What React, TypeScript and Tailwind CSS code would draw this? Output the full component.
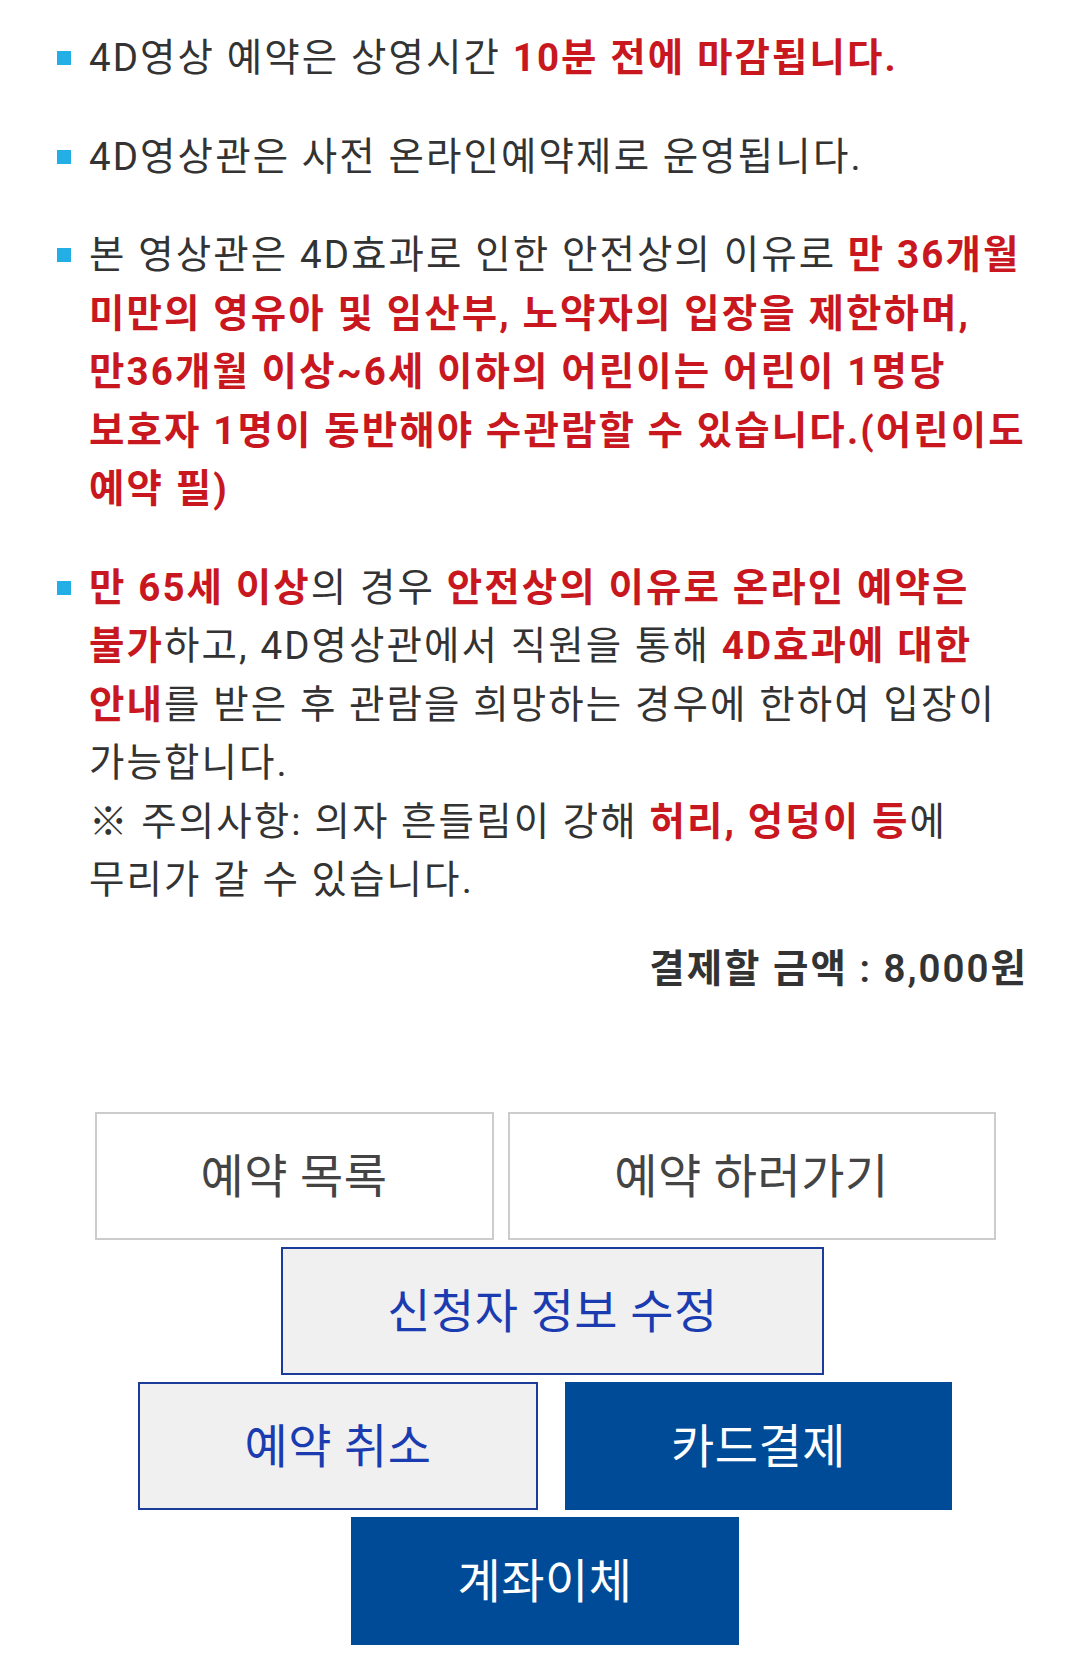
import React from "react";

const R = ({ children }: { children: React.ReactNode }) => (
  <b className="font-bold text-[#c8171e]">{children}</b>
);

function Note({ children }: { children: React.ReactNode }) {
  return (
    <li className="flex items-start">
      <span className="mt-[22px] mr-[18px] h-[14px] w-[14px] shrink-0 bg-[#24aee6]" />
      <p className="min-w-0 flex-1 break-keep">{children}</p>
    </li>
  );
}

type BtnKind = "plain" | "outline" | "solid";

function Btn({ label, kind, w }: { label: string; kind: BtnKind; w: string }) {
  const cls =
    kind === "plain"
      ? "border-2 border-[#cccccc] bg-white text-[#444444]"
      : kind === "outline"
        ? "border-2 border-[#1c3c9a] bg-[#f0f0f0] text-[#1a3cb0]"
        : "bg-[#004b98] text-white";
  return (
    <button
      type="button"
      className={`flex h-[128px] items-center justify-center text-[47px] leading-none tracking-[0.5px] ${cls} ${w}`}
    >
      {label}
    </button>
  );
}

export default function App() {
  return (
    <div
      className="min-h-[1660px] w-[1080px] bg-white text-[#333333]"
      style={{ fontFamily: "Roboto, 'Noto Sans CJK KR', 'Noto Sans', sans-serif" }}
    >
      <div className="pl-[57px] pr-[42px] pt-[29px]">
        <ul className="flex flex-col gap-[40px] text-[38.5px] leading-[58.5px] tracking-[2.1px]">
          <Note>
            4D영상 예약은 상영시간 <R>10분 전에 마감됩니다.</R>
          </Note>
          <Note>4D영상관은 사전 온라인예약제로 운영됩니다.</Note>
          <Note>
            본 영상관은 4D효과로 인한 안전상의 이유로{" "}
            <R>
              만 36개월 미만의 영유아 및 임산부, 노약자의 입장을 제한하며, 만36개월 이상~6세 이하의 어린이는 어린이
              1명당 보호자 1명이 동반해야 수관람할 수 있습니다.(어린이도 예약 필)
            </R>
          </Note>
          <Note>
            <R>만 65세 이상</R>의 경우 <R>안전상의 이유로 온라인 예약은 불가</R>하고, 4D영상관에서 직원을 통해{" "}
            <R>4D효과에 대한 안내</R>를 받은 후 관람을 희망하는 경우에 한하여 입장이 가능합니다.
            <br />※ 주의사항: 의자 흔들림이 강해 <R>허리, 엉덩이 등</R>에 무리가 갈 수 있습니다.
          </Note>
        </ul>
        <p className="mt-[30px] pr-[10px] text-right text-[38.5px] font-semibold leading-[58.5px] tracking-[2px] text-[#333333]">
          결제할 금액 : 8,000원
        </p>
      </div>

      <div className="mt-[114px] flex flex-col items-center gap-[7px] pl-[10px]">
        <div className="flex gap-[14px]">
          <Btn label="예약 목록" kind="plain" w="w-[399px]" />
          <Btn label="예약 하러가기" kind="plain" w="w-[488px]" />
        </div>
        <div className="ml-[15px] flex">
          <Btn label="신청자 정보 수정" kind="outline" w="w-[543px]" />
        </div>
        <div className="flex gap-[27px]">
          <Btn label="예약 취소" kind="outline" w="w-[400px]" />
          <Btn label="카드결제" kind="solid" w="w-[387px]" />
        </div>
        <div className="flex">
          <Btn label="계좌이체" kind="solid" w="w-[388px]" />
        </div>
      </div>
    </div>
  );
}
